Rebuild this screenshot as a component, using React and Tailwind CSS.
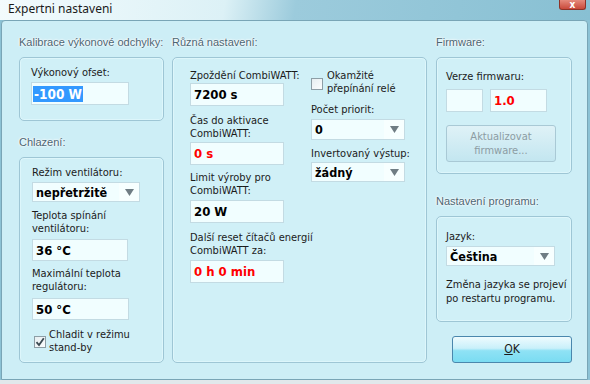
import React from 'react'

const ui = { fontFamily: '"DejaVu Sans Condensed", "DejaVu Sans", Tahoma, sans-serif' }
const head = { fontFamily: '"Liberation Sans", Arial, sans-serif' }

function GroupTitle({ children, className = '' }) {
  return (
    <div
      style={head}
      className={`h-[15px] leading-[15px] text-[11px] whitespace-nowrap text-[#4a6573] [text-shadow:0_0_3px_#fff,0_0_2px_#fff,0_0_1px_#fff] ${className}`}
    >
      {children}
    </div>
  )
}

function Box({ className = '', children }) {
  return (
    <div className={`border border-[#9ec6d5] rounded-[5px] bg-[#d0f0f7] shadow-[inset_0_0_0_1px_#ddf6fb] ${className}`}>
      {children}
    </div>
  )
}

function Field({ value, red, w, h = 'h-[23px]', className = '' }) {
  return (
    <div
      className={`${w} ${h} bg-[#f1feff] border border-[#c3dbe3] flex items-center pl-[3px] text-[13px] font-bold ${red ? 'text-[#ff0000]' : 'text-black'} ${className}`}
    >
      {value}
    </div>
  )
}

function Arrow() {
  return (
    <svg width="9" height="7" viewBox="0 0 9 7">
      <path d="M0 0 H9 L4.5 7 Z" fill="#6f7d84" />
    </svg>
  )
}

function Select({ value, w, h = 'h-[20px]', className = '' }) {
  return (
    <div className={`${w} ${h} bg-[#f1feff] border border-[#c3dbe3] flex items-center text-[12.5px] font-bold text-black ${className}`}>
      <span className="pl-[3px] flex-1">{value}</span>
      <span className="w-[20px] h-full bg-[#f7ffff] flex items-center justify-center">
        <Arrow />
      </span>
    </div>
  )
}

function Check({ checked }) {
  return (
    <div className="w-[12px] h-[12px] border border-[#8d9ea6] bg-[linear-gradient(135deg,#e6eef1,#fbfdfe)] flex items-center justify-center shrink-0">
      {checked && (
        <svg width="10" height="10" viewBox="0 0 10 10">
          <path d="M1.5 5.2 L4 8 L8.8 1.2" fill="none" stroke="#3b4a52" strokeWidth="1.8" />
        </svg>
      )}
    </div>
  )
}

export default function App() {
  return (
    <div style={ui} className="w-[590px] h-[384px] overflow-hidden bg-[#8cc2d5] text-[11px] leading-[13px] text-[#1b1b1b]">
      {/* title bar */}
      <div className="h-[20px] flex bg-[linear-gradient(100deg,#f3fbfd_0%,#dcf1f6_38%,#9ccbdc_50%,#88c0d3_100%)]">
        <div style={{ fontFamily: '"Noto Sans", "Open Sans", sans-serif' }} className="pl-[8px] pt-[2px] text-[12px] leading-[14px] text-[#1a1a1a]">Expertni nastaveni</div>
        <div className="ml-auto mr-[4px] w-[27px] h-[10px] rounded-b-[3px] border border-t-0 border-[#8e3328] bg-[linear-gradient(#e58a7c,#c9493a)] flex items-end justify-center">
          <span className="text-white text-[10px] leading-[9px] font-bold">x</span>
        </div>
      </div>

      {/* main panel */}
      <div className="ml-[1px] w-[587px] h-[360px] border border-[#79a5b6] rounded-t-[4px] bg-[#cdeef6] pt-[14px] pl-[17px] flex">
        {/* column 1 */}
        <div className="w-[145px] flex flex-col">
          <GroupTitle>Kalibrace výkonové odchylky:</GroupTitle>
          <Box className="mt-[7px] h-[64px] pl-[11px] pt-[8px]">
            <div>Výkonový ofset:</div>
            <div className="mt-[3px] w-[98px] h-[23px] bg-[#f1feff] border border-[#c3dbe3] flex items-center pl-[1px]">
              <span className="bg-[#3399ff] text-white font-bold text-[13.5px] leading-[16px] px-[1px]">-100 W</span>
            </div>
          </Box>

          <GroupTitle className="mt-[14px]">Chlazení:</GroupTitle>
          <Box className="mt-[7px] h-[206px] pl-[12px] pt-[8px]">
            <div>Režim ventilátoru:</div>
            <Select value="nepřetržitě" w="w-[108px]" className="mt-[3px]" />
            <div className="mt-[7px]">Teplota spínání<br />ventilátoru:</div>
            <Field value="36 °C" w="w-[96px]" h="h-[22px]" className="mt-[4px]" />
            <div className="mt-[6px]">Maximální teplota<br />regulátoru:</div>
            <Field value="50 °C" w="w-[97px]" h="h-[22px]" className="mt-[5px]" />
            <div className="mt-[8px] flex">
              <div className="ml-[2px] mt-[8px]"><Check checked /></div>
              <div className="ml-[3px]">Chladit v režimu<br />stand-by</div>
            </div>
          </Box>
        </div>

        {/* column 2 */}
        <div className="ml-[8px] w-[255px] flex flex-col">
          <GroupTitle>Různá nastavení:</GroupTitle>
          <Box className="mt-[7px] h-[306px] pl-[17px] pt-[11px] flex">
            <div className="w-[94px]">
              <div className="whitespace-nowrap">Zpoždění CombiWATT:</div>
              <Field value="7200 s" w="w-[94px]" className="mt-[1px]" />
              <div className="mt-[8px]">Čas do aktivace<br />CombiWATT:</div>
              <Field value="0 s" red w="w-[94px]" className="mt-[2px]" />
              <div className="mt-[6px]">Limit výroby pro<br />CombiWATT:</div>
              <Field value="20 W" w="w-[94px]" className="mt-[3px]" />
              <div className="mt-[8px] whitespace-nowrap">Další reset čítačů energií<br />CombiWATT za:</div>
              <Field value="0 h 0 min" red w="w-[94px]" className="mt-[3px]" />
            </div>
            <div className="ml-[27px] w-[94px]">
              <div className="flex">
                <div className="mt-[9px]"><Check /></div>
                <div className="ml-[4px] whitespace-nowrap">Okamžité<br />přepínání relé</div>
              </div>
              <div className="mt-[8px]">Počet priorit:</div>
              <Select value="0" w="w-[94px]" h="h-[21px]" className="mt-[3px]" />
              <div className="mt-[7px] whitespace-nowrap">Invertovaný výstup:</div>
              <Select value="žádný" w="w-[94px]" className="mt-[2px]" />
            </div>
          </Box>
        </div>

        {/* column 3 */}
        <div className="ml-[9px] w-[136px] flex flex-col">
          <GroupTitle>Firmware:</GroupTitle>
          <Box className="mt-[7px] h-[117px] pl-[9px] pt-[12px]">
            <div>Verze firmwaru:</div>
            <div className="mt-[6px] flex">
              <Field value="" w="w-[37px]" />
              <Field value="1.0" red w="w-[57px]" className="ml-[7px]" />
            </div>
            <div className="mt-[13px] w-[110px] h-[37px] rounded-[3px] border border-[#a9c9d5] bg-[linear-gradient(#dff2f7,#c3e6f0)] flex items-center justify-center text-center text-[#8c9ca3] leading-[14px]">
              Aktualizovat<br />firmware...
            </div>
          </Box>

          <GroupTitle className="mt-[20px]">Nastavení programu:</GroupTitle>
          <Box className="mt-[7px] h-[106px] pl-[9px] pt-[13px]">
            <div>Jazyk:</div>
            <Select value="Čeština" w="w-[109px]" className="mt-[3px]" />
            <div className="mt-[12px] leading-[14px]">Změna jazyka se projeví<br />po restartu programu.</div>
          </Box>

          <div className="mt-[14px] self-end w-[120px] h-[27px] rounded-[3px] border border-[#4a87ad] bg-[linear-gradient(#eefbfe_0%,#c9f0fa_45%,#8fe2f5_55%,#7adcf2_100%)] flex items-center justify-center">
            <span className="text-[12px]"><span className="underline">O</span>K</span>
          </div>
        </div>
      </div>
      <div className="h-[4px] bg-[#e1e8eb]" />
    </div>
  )
}
